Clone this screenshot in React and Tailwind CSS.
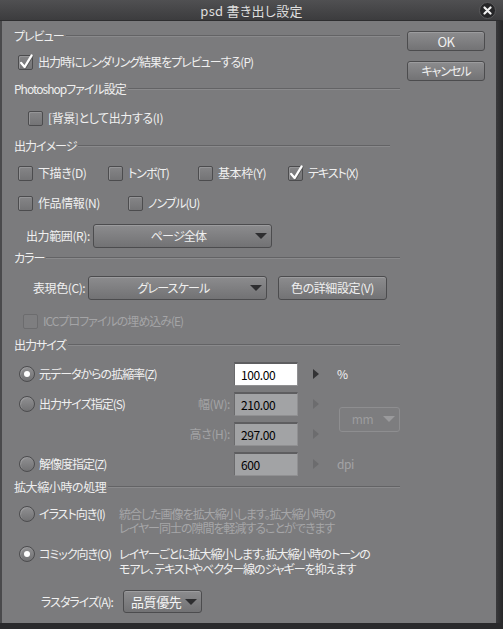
import React from 'react'

const font = { fontFamily: '"Noto Sans CJK JP", "Noto Sans", sans-serif' }

function Header({ title, tight, className = '' }) {
  return (
    <div className={`flex items-center h-[16px] pl-[12px] ${className}`}>
      <span className={`whitespace-nowrap text-[#efefef] ${tight ? 'tracking-[-1px]' : ''}`}>{title}</span>
      <div className="flex-1 ml-[2px] h-[2px] border-t border-t-[#636365] border-b border-b-[#8a8a8c]"></div>
    </div>
  )
}

function Check({ checked, disabled }) {
  return (
    <div
      className={`relative w-[15px] h-[15px] shrink-0 rounded-[2px] border ${
        disabled
          ? 'border-[#6c6c6e] bg-[#7e7e80]'
          : 'border-[#4c4c4e] bg-linear-to-b from-[#858587] to-[#747476] shadow-[inset_1px_1px_0_#959597]'
      }`}
    >
      {checked && (
        <svg className="absolute -left-[1px] -top-[3px]" width="16" height="17" viewBox="0 0 16 17">
          <path d="M3.2 10 L6.6 14 L13.6 2.5" fill="none" stroke="#5a5a5a" strokeWidth="2.6" strokeLinecap="round" strokeLinejoin="round" transform="translate(0.6 0.6)" />
          <path d="M3.2 10 L6.6 14 L13.6 2.5" fill="none" stroke="#ffffff" strokeWidth="2.4" strokeLinecap="round" strokeLinejoin="round" />
        </svg>
      )}
    </div>
  )
}

function CheckItem({ label, checked, disabled, width, tight }) {
  return (
    <div className={`flex items-center ${width || ''}`}>
      <Check checked={checked} disabled={disabled} />
      <span
        className={`ml-[5px] whitespace-nowrap ${tight ? 'tracking-[-1px]' : ''} ${
          disabled ? 'text-[#a4a4a6]' : 'text-[#f0f0f0]'
        }`}
      >
        {label}
      </span>
    </div>
  )
}

function Radio({ on }) {
  return (
    <div className="w-[16px] h-[16px] shrink-0 rounded-full border border-[#4c4c4e] bg-linear-to-b from-[#909092] to-[#727274] shadow-[inset_1px_1px_0_#9a9a9c] flex items-center justify-center">
      {on && <div className="w-[6px] h-[6px] rounded-full bg-white"></div>}
    </div>
  )
}

function Arrow({ dim }) {
  return (
    <div
      className={`w-0 h-0 border-y-[5px] border-y-transparent border-l-[6px] ${
        dim ? 'border-l-[#6c6c6e]' : 'border-l-[#333335]'
      }`}
    ></div>
  )
}

function DownArrow({ dim }) {
  return (
    <div
      className={`w-0 h-0 border-x-[6px] border-x-transparent border-t-[6px] ${
        dim ? 'border-t-[#9a9a9c]' : 'border-t-[#2e2e30]'
      }`}
    ></div>
  )
}

function Select({ value, width }) {
  return (
    <div
      className={`relative flex items-center h-full ${width} rounded-[3px] border border-[#4c4c4e] bg-linear-to-b from-[#8c8c8e] to-[#727274] shadow-[inset_0_1px_0_#9c9c9e]`}
    >
      <span className="flex-1 text-center pr-[8px] text-[#f0f0f0] tracking-[-0.8px]">{value}</span>
      <div className="absolute right-[4px] top-1/2 -translate-y-1/2">
        <DownArrow />
      </div>
    </div>
  )
}

function Button({ children, className = '' }) {
  return (
    <div
      className={`flex items-center justify-center rounded-[3px] border border-[#4c4c4e] bg-linear-to-b from-[#8c8c8e] to-[#737375] shadow-[inset_0_1px_0_#9c9c9e] text-[#f0f0f0] ${className}`}
    >
      {children}
    </div>
  )
}

function Field({ value, white }) {
  return (
    <div
      className={`w-[64px] h-[24px] flex items-center pl-[6px] text-black border-t-2 border-l border-t-[#5e5e60] border-l-[#6a6a6c] border-b border-r border-b-[#909092] border-r-[#909092] ${
        white ? 'bg-white' : 'bg-[#a2a3a5]'
      }`}
    >
      {value}
    </div>
  )
}

function SizeRow({ radio, label, sub, value, white, unit, dimArrow, className = '' }) {
  return (
    <div className={`flex items-center h-[24px] ${className}`}>
      <div className="flex items-center w-[228px] pl-[17px]">
        {radio !== undefined ? (
          <>
            <Radio on={radio} />
            <span className="ml-[4px] text-[#f0f0f0] whitespace-nowrap tracking-[-1px]">{label}</span>
          </>
        ) : null}
        <span className="ml-auto text-[#a3a3a5] whitespace-nowrap">{sub}</span>
      </div>
      <div className="ml-[4px]">
        <Field value={value} white={white} />
      </div>
      <div className="ml-[15px]">
        <Arrow dim={dimArrow} />
      </div>
      {unit && <span className={`ml-[18px] ${dimArrow ? 'text-[#a3a3a5]' : 'text-[#f0f0f0]'}`}>{unit}</span>}
    </div>
  )
}

export default function App() {
  return (
    <div
      className="w-[503px] h-[629px] bg-[#2c2c2e] flex flex-col text-[12px] leading-none tracking-[-0.4px] [font-feature-settings:'palt']"
      style={font}
    >
      {/* title bar */}
      <div className="relative h-[21px] shrink-0 bg-linear-to-b from-[#505052] to-[#3c3c3e] border-b border-[#2e2e30] flex items-center justify-center">
        <span className="text-[13px] text-[#dedede] tracking-[0.3px]">psd 書き出し設定</span>
        <div className="absolute right-[7px] top-[2px] w-[17px] h-[17px] rounded-full bg-[#262628] border border-[#5a5a5c] flex items-center justify-center">
          <svg width="9" height="9" viewBox="0 0 9 9">
            <path d="M1.5 1.5 L7.5 7.5 M7.5 1.5 L1.5 7.5" stroke="#f0f0f0" strokeWidth="2.2" strokeLinecap="round" />
          </svg>
        </div>
      </div>

      <div className="flex flex-1">
        <div className="w-[2px] bg-[#4a4a4c]"></div>
        <div className="w-[494px] h-[602px] bg-[#7b7b7d] flex">
          {/* left column */}
          <div className="w-[398px] flex flex-col pt-[7px]">
            <Header title="プレビュー" tight />
            <div className="flex items-center h-[20px] mt-[8px] pl-[16px]">
              <CheckItem label="出力時にレンダリング結果をプレビューする(P)" checked tight />
            </div>

            <div className="mt-[9px]">
              <Header title="Photoshopファイル設定" tight />
            </div>
            <div className="flex items-center h-[20px] mt-[11px] pl-[26px]">
              <CheckItem label="[背景]として出力する(I)" />
            </div>

            <div className="mt-[10px] pr-[10px]">
              <Header title="出力イメージ" tight />
            </div>
            <div className="flex items-center h-[20px] mt-[9px] pl-[16px]">
              <CheckItem label="下描き(D)" width="w-[90px]" />
              <CheckItem label="トンボ(T)" width="w-[90px]" tight />
              <CheckItem label="基本枠(Y)" width="w-[90px]" />
              <CheckItem label="テキスト(X)" checked tight />
            </div>
            <div className="flex items-center h-[20px] mt-[10px] pl-[16px]">
              <CheckItem label="作品情報(N)" width="w-[110px]" />
              <CheckItem label="ノンブル(U)" tight />
            </div>
            <div className="flex items-center h-[24px] mt-[11px] pl-[24px]">
              <span className="w-[67px] text-[#f0f0f0] whitespace-nowrap">出力範囲(R):</span>
              <Select value="ページ全体" width="w-[179px]" />
            </div>

            <div className="mt-[2px]">
              <Header title="カラー" tight />
            </div>
            <div className="flex items-center h-[24px] mt-[10px] pl-[31px]">
              <span className="w-[55px] text-[#f0f0f0] whitespace-nowrap">表現色(C):</span>
              <Select value="グレースケール" width="w-[179px]" />
              <Button className="ml-[11px] w-[109px] h-full">色の詳細設定(V)</Button>
            </div>
            <div className="flex items-center h-[20px] mt-[11px] pl-[21px]">
              <CheckItem label="ICCプロファイルの埋め込み(E)" disabled tight />
            </div>

            <div className="mt-[6px]">
              <Header title="出力サイズ" tight />
            </div>
            <SizeRow className="mt-[9px]" radio={true} label="元データからの拡縮率(Z)" value="100.00" white unit="%" />
            <div className="flex items-center mt-[6px]">
              <div className="flex flex-col gap-[6px]">
                <SizeRow radio={false} label="出力サイズ指定(S)" sub="幅(W):" value="210.00" dimArrow />
                <SizeRow sub="高さ(H):" value="297.00" dimArrow />
              </div>
              <div className="ml-[20px] w-[64px] h-[25px] rounded-[3px] border border-[#8e8e90] bg-[#7d7d7f] flex items-center relative">
                <span className="flex-1 text-center pr-[14px] text-[#9c9c9e]">mm</span>
                <div className="absolute right-[4px] top-1/2 -translate-y-1/2">
                  <DownArrow dim />
                </div>
              </div>
            </div>
            <SizeRow className="mt-[6px]" radio={false} label="解像度指定(Z)" value="600" unit="dpi" dimArrow />

            <div className="mt-[3px]">
              <Header title="拡大縮小時の処理" />
            </div>
            <div className="flex items-start mt-[12px] pl-[17px]">
              <div className="flex items-center w-[100px] h-[14px] shrink-0">
                <Radio />
                <span className="ml-[4px] text-[#f0f0f0] whitespace-nowrap tracking-[-1px]">イラスト向き(I)</span>
              </div>
              <div className="text-[#a6a6a8] leading-[14px] whitespace-nowrap tracking-[-1px]">
                <div>統合した画像を拡大縮小します。拡大縮小時の</div>
                <div>レイヤー同士の隙間を軽減することができます</div>
              </div>
            </div>
            <div className="flex items-start mt-[11px] pl-[17px]">
              <div className="flex items-center w-[100px] h-[15px] shrink-0">
                <Radio on />
                <span className="ml-[4px] text-[#f0f0f0] whitespace-nowrap tracking-[-1px]">コミック向き(O)</span>
              </div>
              <div className="text-[#f0f0f0] leading-[15px] whitespace-nowrap tracking-[-1px]">
                <div>レイヤーごとに拡大縮小します。拡大縮小時のトーンの</div>
                <div>モアレ、テキストやベクター線のジャギーを抑えます</div>
              </div>
            </div>
            <div className="flex items-center h-[23px] mt-[14px] pl-[39px]">
              <span className="w-[82px] text-[#f0f0f0] whitespace-nowrap tracking-[-1px]">ラスタライズ(A):</span>
              <div className="relative flex items-center h-full w-[79px] rounded-[3px] border border-[#4c4c4e] bg-linear-to-b from-[#8c8c8e] to-[#727274] shadow-[inset_0_1px_0_#9c9c9e]">
                <span className="pl-[7px] text-[13px] text-[#f4f4f4]">品質優先</span>
                <div className="absolute right-[4px] top-1/2 -translate-y-1/2">
                  <DownArrow />
                </div>
              </div>
            </div>
          </div>

          {/* right column */}
          <div className="flex flex-col pl-[7px] pt-[10px] gap-[10px]">
            <Button className="w-[78px] h-[20px] text-[13px]">OK</Button>
            <Button className="w-[78px] h-[20px] tracking-[-1px]">キャンセル</Button>
          </div>
        </div>
        <div className="flex-1 bg-linear-to-r from-[#3a3a3c] to-[#262628]"></div>
      </div>
      <div className="h-[6px] shrink-0 bg-[#2a2a2c]"></div>
    </div>
  )
}
